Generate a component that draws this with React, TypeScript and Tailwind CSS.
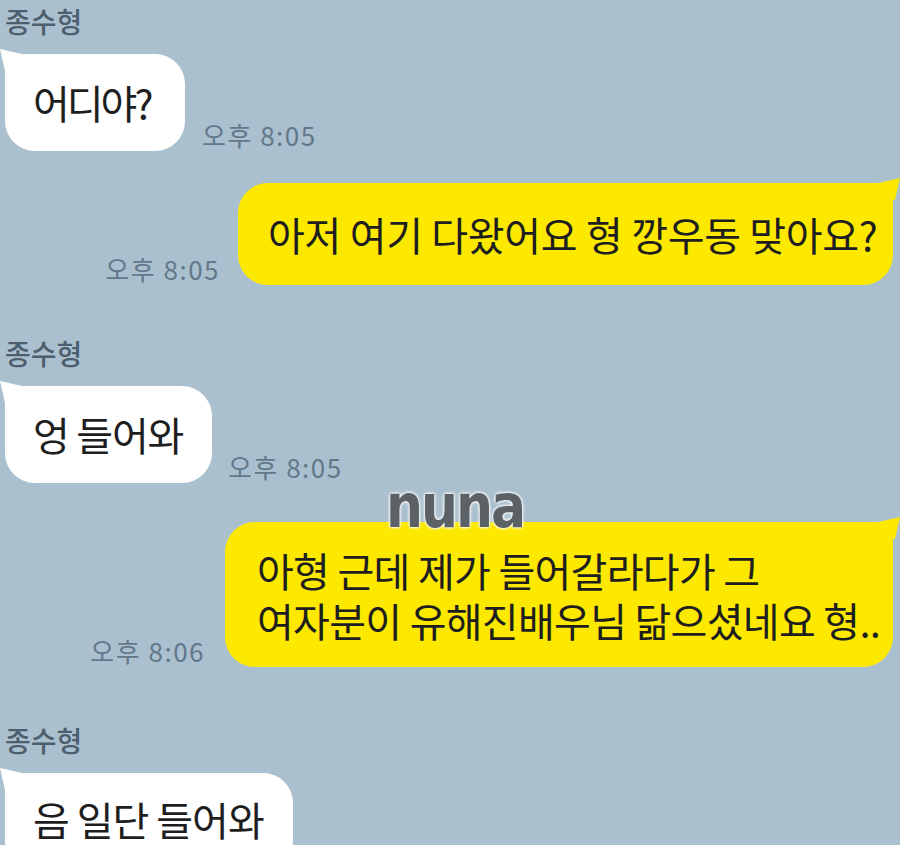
import React from 'react';

const kr = "font-['Noto_Sans_CJK_KR','Noto_Sans',sans-serif]";

function Name() {
  return (
    <div className={`${kr} pl-[5px] text-[28px] leading-[32px] font-medium text-[#4d5f6e]`}>종수형</div>
  );
}

function Time({ t }: { t: string }) {
  return (
    <span className={`${kr} mb-[3px] text-[26px] leading-none tracking-[1.5px] text-[#62788a] whitespace-nowrap`}>{t}</span>
  );
}

function LeftTail() {
  return (
    <svg className="absolute -left-[5px] -top-[5px]" width="22" height="22" viewBox="0 0 22 22">
      <path d="M0 0 L22 5 L22 22 L5 22 Z" fill="#ffffff" />
    </svg>
  );
}

function RightTail() {
  return (
    <svg className="absolute -right-[7px] -top-[5px]" width="22" height="22" viewBox="0 0 22 22">
      <path d="M22 0 L0 5 L0 22 L17 22 Z" fill="#fde800" />
    </svg>
  );
}

export default function App() {
  return (
    <div className="w-[900px] h-[858px] bg-[#abc0cf] flex flex-col overflow-hidden relative">
      <div className={`${kr} h-[845px] overflow-hidden flex flex-col pt-[5px] text-[#1e1e1e]`}>
        <Name />
        <div className="mt-[17px] ml-[5px] flex items-end">
          <div className="relative w-[180px] bg-white rounded-[30px] rounded-tl-[8px] pl-[28px] py-[25px] text-[40px] leading-[47px] tracking-[-3px]">
            <LeftTail />
            <span className="relative">어디야?</span>
          </div>
          <div className="ml-[17px]"><Time t="오후 8:05" /></div>
        </div>

        <div className="mt-[32px] mr-[7px] flex items-end justify-end">
          <div className="mr-[18px]"><Time t="오후 8:05" /></div>
          <div className="relative w-[655px] bg-[#fde800] rounded-[30px] rounded-tr-[8px] pl-[30px] py-[27px] text-[40px] leading-[48px] tracking-[-0.3px]">
            <RightTail />
            <span className="relative">아저 여기 다왔어요 형 깡우동 맞아요?</span>
          </div>
        </div>

        <div className="mt-[52px]"><Name /></div>
        <div className="mt-[17px] ml-[5px] flex items-end">
          <div className="relative w-[207px] bg-white rounded-[30px] rounded-tl-[8px] pl-[28px] py-[25px] text-[40px] leading-[47px] tracking-[-1.2px]">
            <LeftTail />
            <span className="relative">엉 들어와</span>
          </div>
          <div className="ml-[16px]"><Time t="오후 8:05" /></div>
        </div>

        <div className="mt-[39px] mr-[7px] flex items-end justify-end">
          <div className="mr-[20px]"><Time t="오후 8:06" /></div>
          <div className="relative w-[668px] bg-[#fde800] rounded-[30px] rounded-tr-[8px] pl-[32px] pt-[23px] pb-[22px] text-[40px] leading-[50px] tracking-[-0.7px]">
            <RightTail />
            <p className="relative">아형 근데 제가 들어갈라다가 그</p>
            <p className="relative">여자분이 유해진배우님 닮으셨네요 형..</p>
          </div>
        </div>

        <div className="mt-[57px]"><Name /></div>
        <div className="mt-[17px] ml-[5px] flex items-end">
          <div className="relative w-[288px] bg-white rounded-[30px] rounded-tl-[8px] pl-[28px] pt-[23px] pb-[27px] text-[40px] leading-[47px] tracking-[-1px]">
            <LeftTail />
            <span className="relative">음 일단 들어와</span>
          </div>
        </div>
      </div>
      <div className="h-[13px] bg-white" />

      <div className="absolute left-[386px] top-[484px] origin-bottom scale-y-[1.15] font-['DejaVu_Sans',sans-serif] font-bold text-[52px] leading-none tracking-[-2px] text-[#5b6164] [text-shadow:0_0_3px_#ffffff,0_0_3px_#ffffff,0_0_2px_#ffffff]">
        nuna
      </div>
    </div>
  );
}
